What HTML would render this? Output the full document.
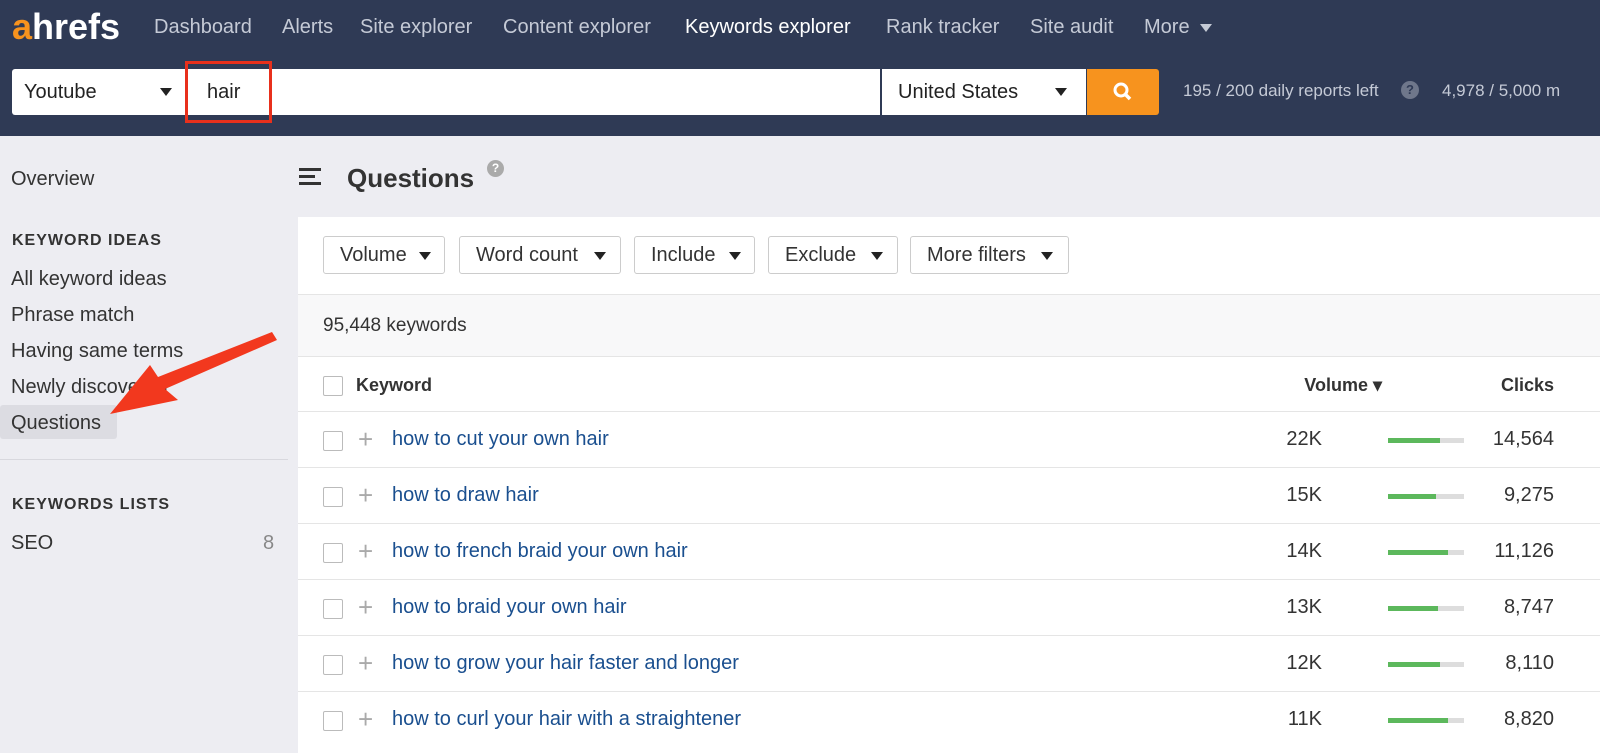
<!DOCTYPE html>
<html><head><style>
*{margin:0;padding:0;box-sizing:border-box}
body{width:1600px;height:753px;overflow:hidden;background:#ededf2;font-family:"Liberation Sans",sans-serif;position:relative;color:#333}
.top{position:absolute;left:0;top:0;width:1600px;height:136px;background:#2f3a55}
.nav{position:absolute;top:16px;font-size:20px;color:#c5cad6}
.logo{position:absolute;left:12px;top:6px;font-size:36px;font-weight:bold;color:#fff;letter-spacing:0px;font-family:"Liberation Sans",sans-serif}
.box{position:absolute;background:#fff;top:69px;height:46px;font-size:20px;color:#222;line-height:46px}
.tri{display:inline-block;width:0;height:0;border-left:6px solid transparent;border-right:6px solid transparent;border-top:8px solid #222;position:absolute}
.side{position:absolute;left:11px;font-size:20px;color:#333}
.sh{position:absolute;left:12px;font-size:16px;font-weight:bold;letter-spacing:1px;color:#333}
.panel{position:absolute;left:298px;top:217px;width:1302px;height:536px;background:#fff}
.btn{position:absolute;top:236px;height:38px;border:1px solid #ccc;border-radius:3px;background:#fff;font-size:20px;line-height:36px;padding-left:16px;color:#333}
.row{position:absolute;left:298px;width:1302px;height:56px;border-top:1px solid #e5e5e5}
.cb{position:absolute;left:25px;top:19px;width:20px;height:20px;border:1px solid #bbb;border-radius:2px;background:#fff}
.kw{position:absolute;left:94px;top:16px;font-size:20px;color:#1a4f8f}
.plus{position:absolute;left:60px;top:12px;font-size:26px;color:#aaa}
.vol{position:absolute;right:278px;top:16px;font-size:20px;color:#333}
.bar{position:absolute;left:1090px;top:26px;width:76px;height:5px;background:#ddd}
.bar i{display:block;height:5px;background:#5cb85c}
.clk{position:absolute;right:46px;top:16px;font-size:20px;color:#333}
</style></head><body>
<div class="top"></div>
<div class="logo"><span style="color:#f7931e">a</span>hrefs</div>
<div class="nav" style="left:154px">Dashboard</div>
<div class="nav" style="left:282px">Alerts</div>
<div class="nav" style="left:360px">Site explorer</div>
<div class="nav" style="left:503px">Content explorer</div>
<div class="nav" style="left:685px;color:#fff">Keywords explorer</div>
<div class="nav" style="left:886px">Rank tracker</div>
<div class="nav" style="left:1030px">Site audit</div>
<div class="nav" style="left:1144px">More</div>
<div class="tri" style="left:1200px;top:24px;border-top-color:#c5cad6"></div>
<div class="box" style="left:12px;width:868px;border-radius:3px 0 0 3px"><span style="margin-left:12px">Youtube</span><span class="tri" style="left:148px;top:19px"></span><span style="position:absolute;left:195px">hair</span></div>
<div style="position:absolute;left:185px;top:61px;width:87px;height:62px;border:3px solid #e8301c"></div>
<div class="box" style="left:882px;width:204px"><span style="margin-left:16px">United States</span><span class="tri" style="left:173px;top:19px"></span></div>
<div style="position:absolute;left:1087px;top:69px;width:72px;height:46px;background:#f7931e;border-radius:0 3px 3px 0"><svg width="72" height="46"><circle cx="34" cy="21" r="6" fill="none" stroke="#fff" stroke-width="3"/><line x1="38" y1="25" x2="43" y2="30" stroke="#fff" stroke-width="3.5"/></svg></div>
<div class="nav" style="left:1183px;top:81px;font-size:17px">195 / 200 daily reports left</div>
<div style="position:absolute;left:1401px;top:81px;width:18px;height:18px;border-radius:50%;background:#6f778b;color:#2f3a55;font-size:13px;text-align:center;line-height:18px;font-weight:bold">?</div>
<div class="nav" style="left:1442px;top:81px;font-size:17px;white-space:nowrap">4,978 / 5,000 m</div>

<div class="side" style="top:168px">Overview</div>
<div class="sh" style="top:232px">KEYWORD IDEAS</div>
<div class="side" style="top:268px">All keyword ideas</div>
<div class="side" style="top:304px">Phrase match</div>
<div class="side" style="top:340px">Having same terms</div>
<div class="side" style="top:376px">Newly discovered</div>
<div style="position:absolute;left:0;top:405px;width:117px;height:34px;background:#dcdce2;border-radius:3px"></div>
<div class="side" style="top:412px">Questions</div>
<div style="position:absolute;left:0;top:459px;width:288px;height:1px;background:#d8d8de"></div>
<div class="sh" style="top:496px">KEYWORDS LISTS</div>
<div class="side" style="top:532px">SEO</div>
<div class="side" style="top:532px;left:263px;color:#888">8</div>
<svg style="position:absolute;left:0;top:0" width="300" height="450"><polygon points="272,332 277,340 165,389 178,400 110,414 150,365 158,377" fill="#f2381e"/></svg>

<svg style="position:absolute;left:299px;top:166px" width="24" height="20"><rect y="2" width="22" height="3" fill="#333"/><rect y="9" width="16" height="3" fill="#333"/><rect y="16" width="22" height="3" fill="#333"/></svg>
<div style="position:absolute;left:347px;top:163px;font-size:26px;font-weight:bold;color:#333">Questions</div>
<div style="position:absolute;left:487px;top:160px;width:17px;height:17px;border-radius:50%;background:#aaa;color:#fff;font-size:12px;text-align:center;line-height:17px;font-weight:bold">?</div>

<div class="panel"></div>
<div class="btn" style="left:323px;width:122px">Volume<span class="tri" style="left:95px;top:15px"></span></div>
<div class="btn" style="left:459px;width:162px">Word count<span class="tri" style="left:134px;top:15px"></span></div>
<div class="btn" style="left:634px;width:121px">Include<span class="tri" style="left:94px;top:15px"></span></div>
<div class="btn" style="left:768px;width:130px">Exclude<span class="tri" style="left:102px;top:15px"></span></div>
<div class="btn" style="left:910px;width:159px">More filters<span class="tri" style="left:130px;top:15px"></span></div>
<div style="position:absolute;left:298px;top:294px;width:1302px;height:62px;background:#f8f8f9;border-top:1px solid #e5e5e5"></div>
<div style="position:absolute;left:323px;top:315px;font-size:19px">95,448 keywords</div>
<div class="row" style="top:356px"><div class="cb"></div><div class="kw" style="left:58px;color:#333;font-weight:bold;font-size:18px;top:18px">Keyword</div><div class="vol" style="right:218px;font-weight:bold;font-size:18px;top:18px">Volume ▾</div><div class="clk" style="font-weight:bold;font-size:18px;top:18px">Clicks</div></div>
<div class="row" style="top:411px"><div class="cb"></div><div class="plus">+</div><div class="kw">how to cut your own hair</div><div class="vol">22K</div><div class="bar"><i style="width:52px"></i></div><div class="clk">14,564</div></div>
<div class="row" style="top:467px"><div class="cb"></div><div class="plus">+</div><div class="kw">how to draw hair</div><div class="vol">15K</div><div class="bar"><i style="width:48px"></i></div><div class="clk">9,275</div></div>
<div class="row" style="top:523px"><div class="cb"></div><div class="plus">+</div><div class="kw">how to french braid your own hair</div><div class="vol">14K</div><div class="bar"><i style="width:60px"></i></div><div class="clk">11,126</div></div>
<div class="row" style="top:579px"><div class="cb"></div><div class="plus">+</div><div class="kw">how to braid your own hair</div><div class="vol">13K</div><div class="bar"><i style="width:50px"></i></div><div class="clk">8,747</div></div>
<div class="row" style="top:635px"><div class="cb"></div><div class="plus">+</div><div class="kw">how to grow your hair faster and longer</div><div class="vol">12K</div><div class="bar"><i style="width:52px"></i></div><div class="clk">8,110</div></div>
<div class="row" style="top:691px"><div class="cb"></div><div class="plus">+</div><div class="kw">how to curl your hair with a straightener</div><div class="vol">11K</div><div class="bar"><i style="width:60px"></i></div><div class="clk">8,820</div></div>
</body></html>
